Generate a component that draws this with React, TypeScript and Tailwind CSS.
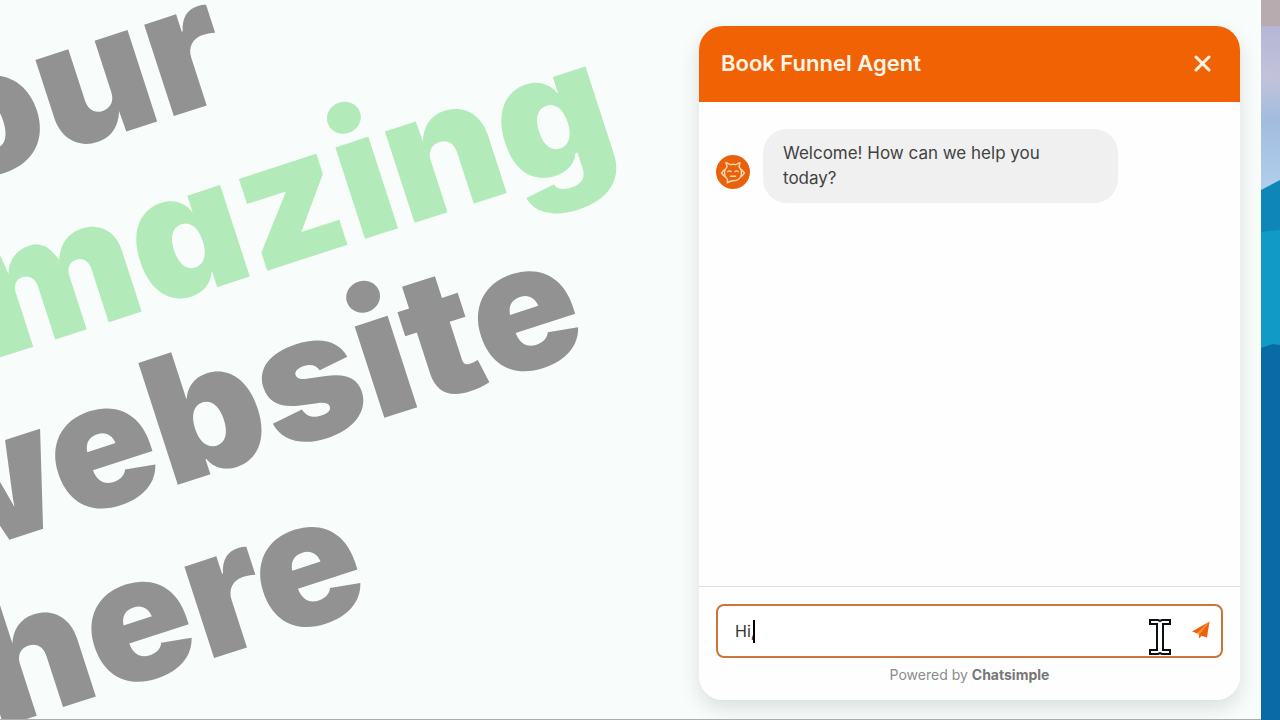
import { useState } from 'react';

const headline = [
  { text: 'your', className: 'pr-[348px] text-[#929292]' },
  { text: 'amazing', className: 'text-[#b2eab9]' },
  { text: 'website', className: 'pr-[90px] text-[#929292]' },
  { text: 'here', className: 'pr-[376px] text-[#929292]' },
];

function Headline() {
  return (
    <h1 className="absolute -top-[157px] -left-[378px] w-[900px] origin-top-right -rotate-18 text-right text-[176px] leading-[176px] font-black whitespace-nowrap [font-feature-settings:'cv11']">
      {headline.map((line) => (
        <span key={line.text} className={`block ${line.className}`}>
          {line.text}
        </span>
      ))}
    </h1>
  );
}

function Wallpaper() {
  return (
    <svg className="h-full w-full" viewBox="0 0 19 720" preserveAspectRatio="none" aria-hidden="true">
      <defs>
        <linearGradient id="sky" x1="0" y1="0" x2="0" y2="1">
          <stop offset="0" stopColor="#b4b6d4" />
          <stop offset="0.3" stopColor="#c2c3da" />
          <stop offset="0.55" stopColor="#a2bcdf" />
          <stop offset="1" stopColor="#b2d0ec" />
        </linearGradient>
      </defs>
      <rect width="19" height="26" fill="#b8abb0" />
      <rect y="26" width="19" height="170" fill="url(#sky)" />
      <path d="M0 190 19 180V240H0Z" fill="#0f86b8" />
      <path d="M0 232 19 230V350H0Z" fill="#129ac7" />
      <path d="M0 348 12 344 19 345V720H0Z" fill="#0a6aa5" />
    </svg>
  );
}

function BotAvatar() {
  return (
    <svg className="h-[34px] w-[34px] shrink-0" viewBox="0 0 34 34" fill="none" aria-hidden="true">
      <circle cx="17" cy="17" r="17" fill="#e8620d" />
      <g stroke="#ffd9b0" strokeWidth="1.4" strokeLinecap="round" strokeLinejoin="round">
        <path d="M11.500 24.500A9 9 0 0 1 8.500 18c0-2.500 1-4.800 2.600-6.300L10 7.500l4.200 2.200a10 10 0 0 1 5.600 0L24 7.500l-1 4.200A8.500 8.500 0 0 1 25.500 18c0 4.800-3.500 7.800-8.500 7.800-2 0-3.500.6-5.700 2Z" />
        <path d="M8.600 14.500 5.500 18l3.100 3.500M25.400 14.500l3.100 3.500-3.100 3.500" />
        <path d="M11.800 16.500c1-.8 2.200-.8 3.200 0M19 16.500c1-.8 2.200-.8 3.200 0M14.500 21.300h5" />
      </g>
    </svg>
  );
}

function PointerIcon() {
  return (
    <svg
      className="pointer-events-none absolute top-[15px] right-[52px] h-[36px] w-[22px]"
      viewBox="0 0 22 36"
      aria-hidden="true"
    >
      <path
        d="M1 1h8l2 1 2-1h8v4h-7v26h7v4h-8l-2-1-2 1H1v-4h7V5H1Z"
        fill="#fff"
        stroke="#0b0f14"
        strokeWidth="2"
      />
    </svg>
  );
}

function ChatWidget() {
  const [message, setMessage] = useState('Hi,');

  return (
    <section className="relative flex w-[541px] flex-col overflow-hidden rounded-3xl bg-[#fefefe]">
      <header className="flex h-[76px] shrink-0 items-center justify-between bg-[#f16205] px-[22px] pb-[2px]">
        <h2 className="text-[22px] font-semibold text-[#fff6ea]">Book Funnel Agent</h2>
        <button type="button" aria-label="Close chat" className="p-[7px]">
          <svg className="h-[17px] w-[17px]" viewBox="0 0 17 17" aria-hidden="true">
            <path d="m2 2 13 13M15 2 2 15" stroke="#fff6ea" strokeWidth="3" strokeLinecap="round" />
          </svg>
        </button>
      </header>

      <div className="flex flex-1 items-start gap-[13px] px-[17px] pt-[27px]">
        <div className="pt-[26px]">
          <BotAvatar />
        </div>
        <p className="w-[355px] rounded-3xl bg-[#f0f0f0] py-[12px] pr-[40px] pl-[20px] text-[17px] leading-[25px] text-[#424242]">
          Welcome! How can we help you today?
        </p>
      </div>

      <form
        className="border-t border-[#dedede] px-[17px] pt-[17px] pb-[14px]"
        onSubmit={(e) => e.preventDefault()}
      >
        <div className="relative">
          <input
            type="text"
            aria-label="Message"
            value={message}
            onChange={(e) => setMessage(e.target.value)}
            className="h-[54px] w-full rounded-lg border-2 border-[#cf7438] bg-white pr-[52px] pl-[17px] text-[16px] text-[#333] outline-none"
          />
          <span className="absolute top-[16px] left-[37px] h-[23px] w-[2px] bg-black" />
          <PointerIcon />
          <button type="submit" aria-label="Send" className="absolute top-[17px] right-[13px]">
            <svg className="h-[18px] w-[18px]" viewBox="0 0 18 18" aria-hidden="true">
              <path d="M17.500.5 0 10.500l5.500 2ZM17.500.5 7 13.300v4.200l2.500-2.700 5.500 1.700Z" fill="#f16205" />
              <path d="M17.500.5 5.500 12.500 7 14Z" fill="#f5894a" />
            </svg>
          </button>
        </div>
        <p className="mt-[6px] text-center text-[14px] leading-[22px] text-[#8c8c8c]">
          Powered by{' '}
          <a href="#chatsimple" className="font-bold text-[#777]">
            Chatsimple
          </a>
        </p>
      </form>
    </section>
  );
}

export default function App() {
  return (
    <div className="flex min-h-screen bg-[#f8fcfb] font-[Inter,'Open_Sans',sans-serif]">
      <main className="relative flex flex-1 justify-end overflow-hidden border-b border-[#a9adac] pt-[26px] pr-[21px] pb-[19px]">
        <Headline />
        <div className="flex rounded-3xl shadow-[0_8px_20px_rgba(0,0,0,0.12)]">
          <ChatWidget />
        </div>
      </main>
      <aside className="w-[19px] shrink-0">
        <div className="h-screen">
          <Wallpaper />
        </div>
      </aside>
    </div>
  );
}
